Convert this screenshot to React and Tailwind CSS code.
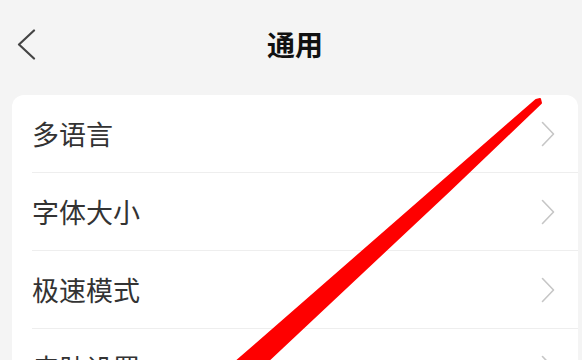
const items = ['多语言', '字体大小', '极速模式', '皮肤设置']

function Chevron({ className }) {
  return (
    <svg className={className} viewBox="0 0 14 26" fill="none">
      <path d="M1.5 1.5 L12.5 13 L1.5 24.5" stroke="currentColor" strokeWidth="1.6" strokeLinecap="round" strokeLinejoin="round" />
    </svg>
  )
}

export default function App() {
  return (
    <div
      className="relative w-full h-[360px] overflow-hidden bg-[#f4f4f4] text-[#333]"
      style={{ fontFamily: '"Noto Sans CJK SC", "Noto Sans", sans-serif' }}
    >
      {/* Header */}
      <div className="grid grid-cols-[1fr_auto_1fr] items-center h-[88px]">
        <div className="pl-[17px] flex items-center">
          <svg className="w-[19px] h-[31px] text-[#444]" viewBox="0 0 19 31" fill="none">
            <path d="M17 1.5 L2 15.5 L17 29.5" stroke="currentColor" strokeWidth="2.2" strokeLinecap="round" strokeLinejoin="round" />
          </svg>
        </div>
        <h1 className="relative left-[4px] text-[28px] font-bold text-[#111] leading-none">通用</h1>
        <div />
      </div>

      {/* Settings list */}
      <div className="mt-[7px] ml-3 mr-1 rounded-t-[12px] bg-white">
        {items.map((label) => (
          <div key={label} className="h-[78px] pl-5">
            <div className="flex items-center h-full border-b border-[#eeeeee] pr-[23px]">
              <span className="flex-1 text-[27px] leading-none">{label}</span>
              <Chevron className="w-[14px] h-[26px] text-[#c6c6c6]" />
            </div>
          </div>
        ))}
      </div>

      {/* Red annotation stroke */}
      <svg className="absolute inset-0 w-[582px] h-[360px] pointer-events-none" viewBox="0 0 582 360">
        <path
          d="M536 100 L540 99 L541 103 L450 190 L255 373 L223 373 Z"
          fill="#fe0000"
          stroke="#fe0000"
          strokeWidth="2"
          strokeLinejoin="round"
        />
      </svg>
    </div>
  )
}
